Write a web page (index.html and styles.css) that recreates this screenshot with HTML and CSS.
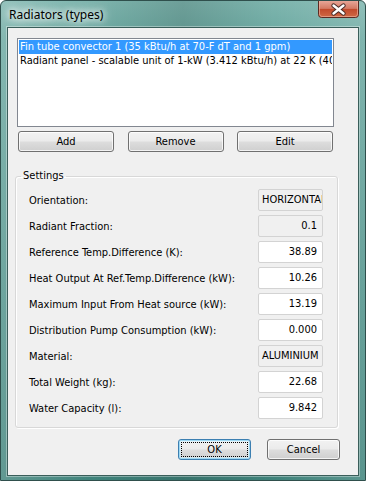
FILE: index.html
```html
<!DOCTYPE html>
<html>
<head>
<meta charset="utf-8">
<link rel="stylesheet" href="styles.css">
</head>
<body>
<div class="window">
  <div class="titlebar">
    <span class="title">Radiators (types)</span>
    <div class="close">
      <svg width="41" height="17" viewBox="0 0 41 17">
        <defs>
          <linearGradient id="cg" x1="0" y1="0" x2="0" y2="1">
            <stop offset="0" stop-color="#e7a597"/>
            <stop offset="0.45" stop-color="#d47a64"/>
            <stop offset="0.5" stop-color="#c24a2c"/>
            <stop offset="1" stop-color="#cf6a45"/>
          </linearGradient>
        </defs>
        <path d="M0.5 0 V13.5 Q0.5 16.5 3.5 16.5 H37.5 Q40.5 16.5 40.5 13.5 V0" fill="url(#cg)" stroke="#5b2a22"/>
        <path d="M1.5 0 V13 Q1.5 15.5 4 15.5 H37 Q39.5 15.5 39.5 13 V0" fill="none" stroke="#f0b7a6" stroke-opacity="0.6"/>
        <path d="M15.5 4.5 L25.5 12.5 M25.5 4.5 L15.5 12.5" stroke="#4a2b27" stroke-width="4.4" stroke-linecap="round"/>
        <path d="M15.5 4.5 L25.5 12.5 M25.5 4.5 L15.5 12.5" stroke="#ffffff" stroke-width="2.4" stroke-linecap="round"/>
      </svg>
    </div>
  </div>
  <div class="client">
    <div class="listbox">
      <div class="item selected">Fin tube convector 1 (35 kBtu/h at 70-F dT and 1 gpm)</div>
      <div class="item">Radiant panel - scalable unit of 1-kW (3.412 kBtu/h) at 22 K (40 F)</div>
    </div>
    <div class="btnrow">
      <button class="btn">Add</button>
      <button class="btn">Remove</button>
      <button class="btn">Edit</button>
    </div>
    <fieldset class="group">
      <legend>Settings</legend>
      <div class="row"><span class="lbl">Orientation:</span><span class="field ro left">HORIZONTAL</span></div>
      <div class="row"><span class="lbl">Radiant Fraction:</span><span class="field ro">0.1</span></div>
      <div class="row"><span class="lbl">Reference Temp.Difference (K):</span><span class="field">38.89</span></div>
      <div class="row"><span class="lbl">Heat Output At Ref.Temp.Difference (kW):</span><span class="field">10.26</span></div>
      <div class="row"><span class="lbl">Maximum Input From Heat source (kW):</span><span class="field">13.19</span></div>
      <div class="row"><span class="lbl">Distribution Pump Consumption (kW):</span><span class="field">0.000</span></div>
      <div class="row"><span class="lbl">Material:</span><span class="field ro left">ALUMINIUM</span></div>
      <div class="row"><span class="lbl">Total Weight (kg):</span><span class="field">22.68</span></div>
      <div class="row"><span class="lbl">Water Capacity (l):</span><span class="field">9.842</span></div>
    </fieldset>
    <div class="footer">
      <button class="btn default"><span class="focus">OK</span></button>
      <button class="btn">Cancel</button>
    </div>
  </div>
</div>
</body>
</html>
```

FILE: styles.css
```css
html, body {
  margin: 0;
  padding: 0;
  background: #ffffff;
}

body {
  font-family: "DejaVu Sans Condensed", "DejaVu Sans", sans-serif;
  font-size: 11px;
  color: #000;
}

.window {
  width: 366px;
  height: 481px;
  box-sizing: border-box;
  border: 1px solid #2f4f4c;
  border-radius: 6px 6px 0 0;
  background:
    linear-gradient(90deg, rgba(255,255,255,0.18) 0%, rgba(255,255,255,0) 25%, rgba(0,0,0,0.12) 50%, rgba(255,255,255,0) 75%, rgba(255,255,255,0.15) 100%),
    linear-gradient(180deg, #7db5ae 0%, #6aa8a0 8%, #4f928a 60%, #3f837b 100%);
  display: flex;
  flex-direction: column;
  overflow: hidden;
}

.titlebar {
  height: 26px;
  display: flex;
  align-items: flex-start;
  flex-shrink: 0;
}

.title {
  font-family: "Noto Sans", "Open Sans", sans-serif;
  font-size: 12px;
  line-height: 16px;
  margin: 6px 0 0 8px;
  color: #000;
  text-shadow: 0 0 6px #ffffff, 0 0 10px #ffffff, 0 0 14px rgba(255,255,255,0.9);
}

.close {
  margin-left: auto;
  margin-right: 6px;
  height: 17px;
  width: 41px;
}

.close svg {
  display: block;
}

.client {
  margin: 0 6px 4px 6px;
  flex: 1;
  border: 1px solid #3a5e5a;
  background: #f0f0f0;
  box-shadow: 0 0 0 1px rgba(255,255,255,0.35);
  display: flex;
  flex-direction: column;
}

.listbox {
  margin: 10px 0 0 9px;
  width: 317px;
  height: 89px;
  box-sizing: border-box;
  border: 1px solid #828790;
  background: #fff;
  padding: 1px;
}

.item {
  height: 14px;
  line-height: 14px;
  padding-left: 1px;
  white-space: nowrap;
  overflow: hidden;
}

.item.selected {
  background: #3399ff;
  color: #fff;
}

.btnrow {
  display: flex;
  justify-content: space-between;
  width: 315px;
  margin: 4px 0 0 10px;
}

.btn {
  font-family: inherit;
  font-size: 11px;
  color: #000;
  width: 96px;
  height: 21px;
  padding: 0;
  box-sizing: border-box;
  border: 1px solid #707070;
  border-radius: 3px;
  background: linear-gradient(180deg, #f2f2f2 0%, #ebebeb 48%, #dddddd 52%, #cfcfcf 100%);
  box-shadow: inset 0 0 0 1px rgba(255,255,255,0.75);
}

.group {
  margin: 17px 0 0 7px;
  width: 323px;
  box-sizing: border-box;
  border: 1px solid #d8d8d8;
  border-radius: 3px;
  padding: 6px 14px 8px 13px;
  display: flex;
  flex-direction: column;
  gap: 4px;
  box-shadow: inset 1px 1px 0 #ffffff, 1px 1px 0 #ffffff;
}

.group legend {
  margin-left: -8px;
  padding: 0 2px;
  line-height: 14px;
}

.row {
  display: flex;
  align-items: center;
  justify-content: space-between;
  height: 22px;
}

.field {
  width: 65px;
  height: 22px;
  box-sizing: border-box;
  border: 1px solid #d3d3d3;
  border-radius: 2px;
  background: #ffffff;
  line-height: 20px;
  text-align: right;
  padding: 0 5px 0 3px;
  white-space: nowrap;
  overflow: hidden;
}

.field.ro {
  background: #f0f0f0;
}

.field.left {
  text-align: left;
}

.footer {
  display: flex;
  justify-content: flex-end;
  gap: 16px;
  margin: 11px 18px 0 0;
}

.footer .btn {
  width: 73px;
}

.btn.default {
  border-color: #3c7fb1;
  box-shadow: inset 0 0 0 1px #9fd9f4, inset 0 0 0 2px rgba(220,245,255,0.6);
  display: flex;
  align-items: center;
  justify-content: center;
  padding: 2px;
}

.btn.default .focus {
  flex: 1;
  align-self: stretch;
  border: 1px dotted #000;
  display: flex;
  align-items: center;
  justify-content: center;
}
```
